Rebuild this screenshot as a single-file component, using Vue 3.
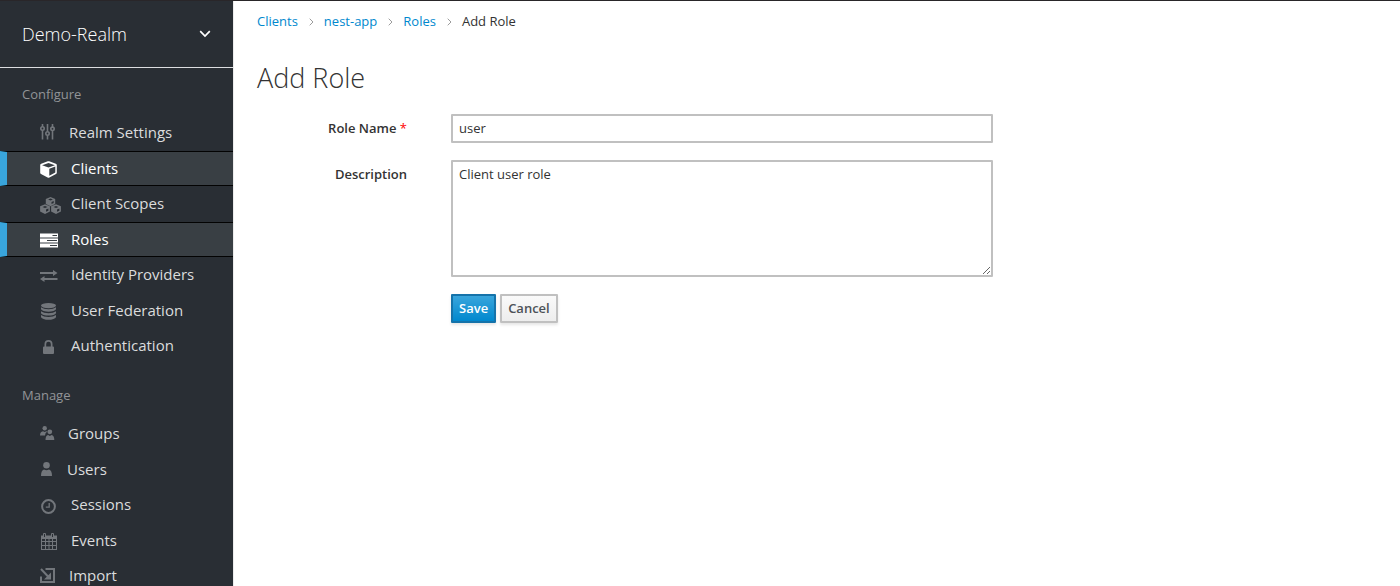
<script setup>
import { ref } from 'vue'

const roleName = ref('user')
const description = ref('Client user role')

const crumbs = ['Clients', 'nest-app', 'Roles']

const groups = [
  {
    title: 'Configure',
    items: [
      { label: 'Realm Settings', icon: 'sliders', size: 'medium' },
      { label: 'Clients', icon: 'cube', size: 'large', active: true },
      { label: 'Client Scopes', icon: 'cubes', size: 'large' },
      { label: 'Roles', icon: 'tasks', size: 'large', active: true },
      { label: 'Identity Providers', icon: 'exchange', size: 'large' },
      { label: 'User Federation', icon: 'database', size: 'large' },
      { label: 'Authentication', icon: 'lock', size: 'large' },
    ],
  },
  {
    title: 'Manage',
    items: [
      { label: 'Groups', icon: 'users', size: 'small' },
      { label: 'Users', icon: 'user', size: 'tiny' },
      { label: 'Sessions', icon: 'clock', size: 'large' },
      { label: 'Events', icon: 'calendar', size: 'large' },
      { label: 'Import', icon: 'import', size: 'medium' },
    ],
  },
]
</script>

<template>
  <div class="shell">
    <nav class="sidebar">
      <button type="button" class="realm">
        <span>Demo-Realm</span>
        <svg width="12" height="8" viewBox="0 0 12 8"><path d="M1.200 1.200 6 6l4.800-4.800" fill="none" stroke="currentColor" stroke-width="1.700" /></svg>
      </button>
      <section v-for="group in groups" :key="group.title" class="group">
        <h2>{{ group.title }}</h2>
        <ul>
          <li v-for="item in group.items" :key="item.label">
            <a href="#" :class="{ active: item.active }">
              <span class="icon" :class="item.size">
                <svg v-if="item.icon === 'sliders'" width="15" height="16" viewBox="0 0 15 16">
                  <g fill="none" stroke="currentColor" stroke-width="1.600">
                    <path d="M2.500 0v2.500M2.500 6v9.500M7.500 0v7.500M7.500 11.500v4M12.500 0v3M12.500 6.500v9" />
                    <circle cx="2.500" cy="4.500" r="1.700" /><circle cx="7.500" cy="9.500" r="1.700" /><circle cx="12.500" cy="4.800" r="1.700" />
                  </g>
                </svg>
                <svg v-else-if="item.icon === 'cube'" class="drop" width="17" height="17" viewBox="0 0 17 17">
                  <path fill="currentColor" fill-rule="evenodd" d="M7.800.3a2 2 0 0 1 1.400 0l6.600 2.400q1 .4 1 1.400v7.600q0 .8-.8 1.300l-6.600 3.600q-.9.500-1.800 0L1 13q-.8-.5-.8-1.300V4.100q0-1 1-1.400zM8.500 1.900 2.100 4.200l6.400 2.400 6.400-2.400zM9.300 14.700l6-3.300V5.600l-6 2.200z" />
                </svg>
                <svg v-else-if="item.icon === 'cubes'" class="drop" width="21" height="17" viewBox="0 0 21 17">
                  <g fill="currentColor" fill-rule="evenodd">
                    <path d="m10.500 0 4.700 1.900v5l-4.700 2.300-4.700-2.300v-5zm0 1.500L8.100 2.500l2.400 1 2.400-1zM11.500 7l2.200-1V4.100l-2.200.9z" />
                    <path d="m5 7.300 4.900 2v5.300L5 17 .1 14.600V9.300zM5 9l-2.500 1L5 11l2.500-1zM6 14.800l2.400-1.100v-2.200L6 12.500z" />
                    <path d="m16 7.300 4.900 2v5.300L16 17l-4.900-2.400V9.300zM16 9l-2.500 1 2.500 1 2.500-1zM17 14.800l2.400-1.100v-2.200l-2.400 1z" />
                  </g>
                </svg>
                <svg v-else-if="item.icon === 'tasks'" class="drop" width="18" height="15" viewBox="0 0 18 15">
                  <path fill="currentColor" fill-rule="evenodd" d="M0 .5h18v4H0zM12.500 2v1H17V2zM0 5.500h18v4H0zM7 7v1h10V7zM0 10.500h18v4H0zM10 12v1h7v-1z" />
                </svg>
                <svg v-else-if="item.icon === 'exchange'" class="drop" width="18" height="12" viewBox="0 0 18 12">
                  <path fill="currentColor" d="M0 2h13V0l4.500 3L13 6V4H0zM17.500 8v2h-13v2L0 9l4.500-3v2z" />
                </svg>
                <svg v-else-if="item.icon === 'database'" class="center drop" width="15" height="17" viewBox="0 0 15 17">
                  <g fill="currentColor">
                    <ellipse cx="7.500" cy="2.600" rx="7.500" ry="2.600" />
                    <path d="M0 4.300q2.500 2 7.500 2t7.500-2v1.800q0 1-2.500 1.900-5 1.400-10 0Q0 7.100 0 6.100z" />
                    <path d="M0 8.200q2.500 2 7.500 2t7.500-2V10q0 1-2.500 1.900-5 1.400-10 0Q0 11 0 10z" />
                    <path d="M0 12.100q2.500 2 7.500 2t7.500-2v1.800q0 1-2.500 2-5 1.700-10 0Q0 14.900 0 13.900z" />
                  </g>
                </svg>
                <svg v-else-if="item.icon === 'lock'" class="center drop" width="15" height="14" viewBox="-2 0 15 14">
                  <path fill="currentColor" fill-rule="evenodd" d="M1.500 6.500V4a4 4 0 0 1 8 0v2.500h.5q1 0 1 1V13q0 1-1 1H1q-1 0-1-1V7.500q0-1 1-1zM3.200 6.500h4.600V4a2.300 2.300 0 0 0-4.600 0z" />
                </svg>
                <svg v-else-if="item.icon === 'users'" width="15" height="14" viewBox="0 0 15 14">
                  <g fill="currentColor">
                    <circle cx="4.700" cy="2.200" r="2.200" />
                    <path d="M0 9.500q0-4 3-4.300l1.700.8 1.600-.8.9.4Q5 7 5 9.500z" />
                    <circle cx="9.800" cy="5.800" r="2.400" />
                    <path d="M5.500 14q0-4.600 2.600-5l1.700.9 1.800-.9q2.700.6 2.700 5z" />
                  </g>
                </svg>
                <svg v-else-if="item.icon === 'user'" width="13" height="14" viewBox="0 0 13 14">
                  <g fill="currentColor">
                    <circle cx="6.500" cy="3.300" r="3.300" />
                    <path d="M1 14q0-5.400 3-6.400 2.500 1.200 5 0 3 1 3 6.400z" />
                  </g>
                </svg>
                <svg v-else-if="item.icon === 'clock'" class="center drop" width="15" height="15" viewBox="0 0 15 15">
                  <g fill="none" stroke="currentColor">
                    <circle cx="7.500" cy="7.500" r="6.400" stroke-width="2" />
                    <path d="M8.200 4v4.200H4.800" stroke-width="1.300" />
                  </g>
                </svg>
                <svg v-else-if="item.icon === 'calendar'" class="drop" width="17" height="17" viewBox="0 0 17 17">
                  <path fill="currentColor" fill-rule="evenodd" d="M1 2.500h2V1q0-1 1-1h1q1 0 1 1v1.500h5V1q0-1 1-1h1q1 0 1 1v1.500h3V17H1zM2 6v2h3V6zM6 6v2h2.500V6zM9.500 6v2H12V6zM13 6v2h3V6zM2 9v3h3V9zM6 9v3h2.500V9zM9.500 9v3H12V9zM13 9v3h3V9zM2 13v3h3v-3zM6 13v3h2.500v-3zM9.500 13v3H12v-3zM13 13v3h3v-3zM4 1v3h1V1zM12 1v3h1V1z" />
                </svg>
                <svg v-else width="15" height="15" viewBox="0 0 15 15">
                  <g fill="none" stroke="currentColor" stroke-width="2">
                    <path d="M5.500 1H14v13H1V8.500" />
                    <path d="m1 1 8 8.500" />
                  </g>
                  <path d="M11 4.500v7H4z" fill="currentColor" />
                </svg>
              </span>
              <span>{{ item.label }}</span>
            </a>
          </li>
        </ul>
      </section>
    </nav>

    <main class="content">
      <ol class="crumbs">
        <li v-for="crumb in crumbs" :key="crumb">
          <a href="#">{{ crumb }}</a>
          <svg width="5" height="8" viewBox="0 0 5 8"><path d="m.7.7 3.300 3.300L.7 7.300" fill="none" stroke="currentColor" /></svg>
        </li>
        <li>Add Role</li>
      </ol>
      <h1>Add Role</h1>
      <form class="form" @submit.prevent>
        <label for="role-name">Role Name <span class="required">*</span></label>
        <input id="role-name" v-model="roleName" type="text" />
        <label for="description">Description</label>
        <textarea id="description" v-model="description"></textarea>
        <div class="actions">
          <button type="submit" class="primary">Save</button>
          <button type="button">Cancel</button>
        </div>
      </form>
    </main>
  </div>
</template>

<style>
body {
  margin: 0;
  background: #fff;
}
</style>

<style scoped>
.shell {
  box-sizing: border-box;
  display: flex;
  height: 100vh;
  border-top: 1px solid #292629;
  font-family: "Open Sans", "Noto Sans", sans-serif;
  font-size: 13px;
  line-height: 20px;
  color: #333;
}
.sidebar {
  flex: none;
  width: 233px;
  overflow-y: auto;
  scrollbar-width: none;
  background: #292e34;
  border-right: 1px solid #ececec;
}
.realm {
  box-sizing: border-box;
  display: flex;
  align-items: center;
  justify-content: space-between;
  width: 100%;
  height: 67px;
  padding: 0 22px;
  border: 0;
  border-bottom: 1px solid #dcdde0;
  background: none;
  color: #fff;
  font: 300 18px/24px "Open Sans", sans-serif;
}
.group h2 {
  margin: 0;
  padding: 16px 22px 10px;
  font-size: 13px;
  font-weight: 400;
  line-height: 21px;
  color: #929497;
}
.group + .group h2 {
  padding-top: 21px;
}
.group ul {
  margin: 0;
  padding: 0;
  list-style: none;
}
.group li {
  height: 36px;
}
.group li:nth-child(even) {
  height: 35px;
}
.group a {
  box-sizing: border-box;
  display: flex;
  align-items: center;
  gap: 10px;
  height: 100%;
  padding: 0 0 2px 40px;
  font-size: 15px;
  color: #dbdcdd;
  text-decoration: none;
}
.group a.active {
  padding-left: 33px;
  border: solid #030303;
  border-width: 1px 0 1px 7px;
  border-left-color: #39a5dc;
  background: #393f44;
  color: #fff;
}
.icon {
  display: flex;
  align-items: center;
  color: #72767b;
}
.active .icon {
  color: #fff;
}
.icon.large {
  width: 21px;
}
.icon.medium {
  width: 19px;
}
.icon.small {
  width: 18px;
}
.icon.tiny {
  width: 17px;
}
.drop {
  margin-top: 4px;
}
.center {
  margin-left: 1px;
}
.content {
  flex: 1;
  min-width: 0;
  padding: 10px 24px 0 23px;
}
.crumbs {
  display: flex;
  margin: 0;
  padding: 0;
  list-style: none;
}
.crumbs li {
  display: flex;
  align-items: center;
}
.crumbs a {
  color: #0088ce;
  text-decoration: none;
}
.crumbs svg {
  margin: 2px 10px 0 11px;
  color: #9c9c9c;
}
h1 {
  margin: 29px 0 19px;
  font-size: 27px;
  font-weight: 300;
  line-height: 35px;
}
.form {
  display: grid;
  grid-template-columns: 150px minmax(0, 542px);
  gap: 17px 44px;
}
.form label {
  padding-top: 4px;
  font-weight: 600;
  text-align: right;
}
.required {
  color: #f00;
  font-weight: 400;
}
input,
textarea {
  box-sizing: border-box;
  width: 100%;
  padding: 2px 6px 3px;
  border: 2px solid #c0c0c0;
  border-radius: 1px;
  background: #fff;
  color: #333;
  font: inherit;
}
input {
  height: 29px;
}
textarea {
  display: block;
  height: 117px;
  resize: vertical;
}
.actions {
  grid-column: 2;
  display: flex;
  gap: 4px;
}
.actions button {
  height: 29px;
  padding: 0 6px 1px;
  border: 2px solid #c0c0c0;
  border-radius: 1px;
  background: linear-gradient(#fafafa, #ededed);
  box-shadow: 0 2px 3px rgba(3, 3, 3, 0.1);
  color: #4d5258;
  font: 600 13px/20px "Open Sans", sans-serif;
}
.actions .primary {
  border-color: #1573aa;
  background: linear-gradient(#39a5dc, #0088ce);
  color: #fff;
}
</style>
